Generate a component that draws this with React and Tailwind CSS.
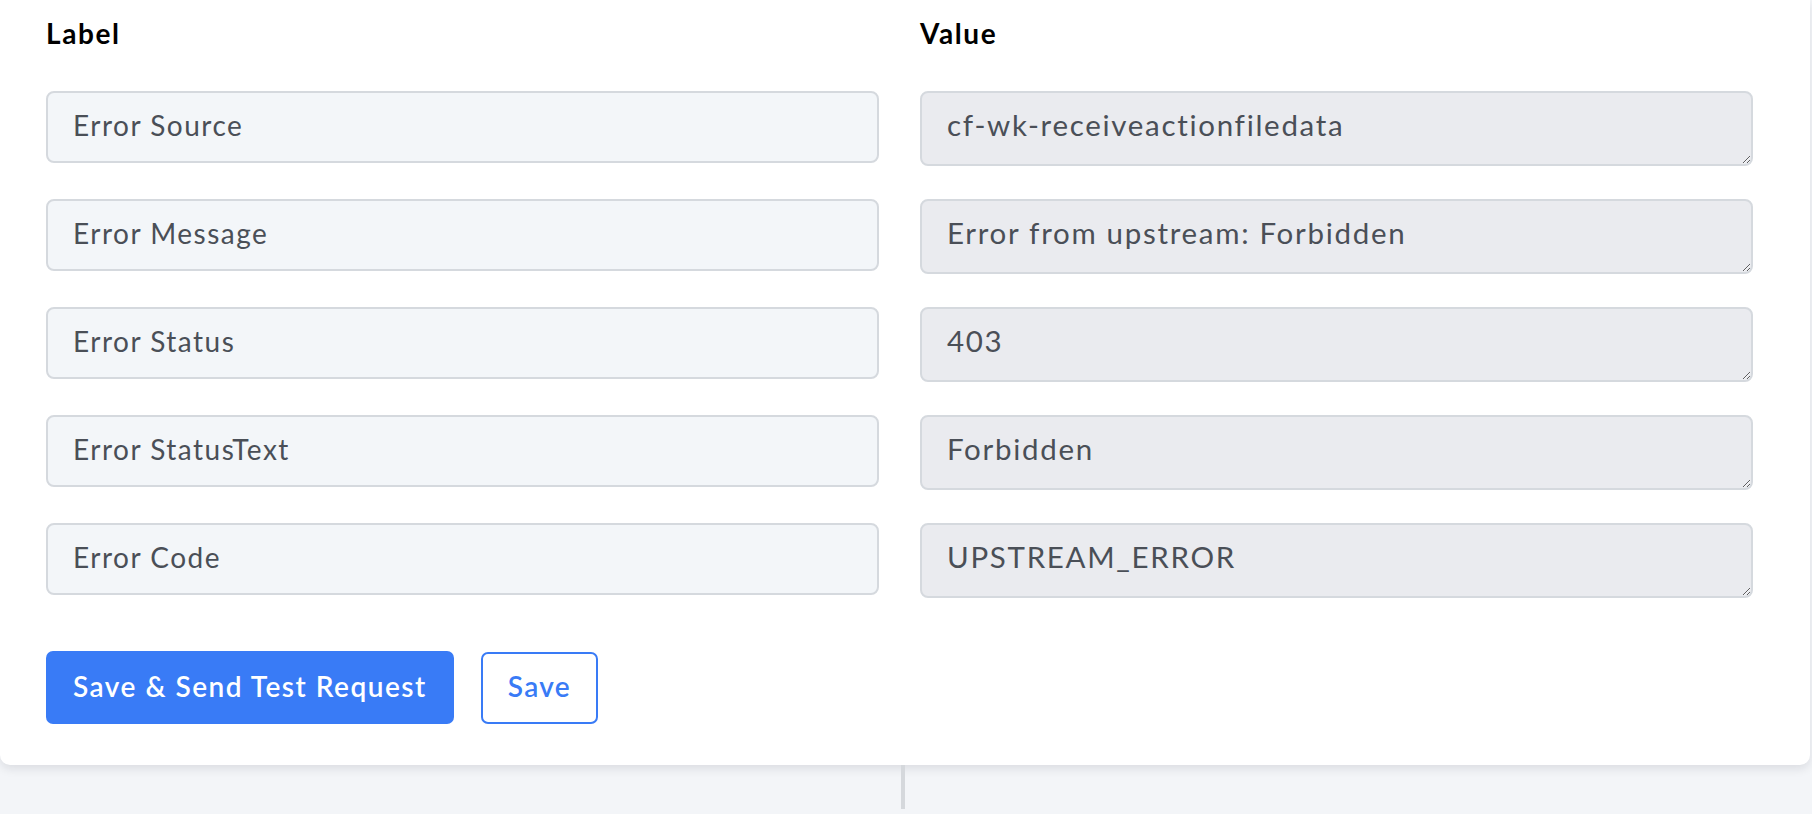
import React from 'react';

const rows = [
  { label: 'Error Source', value: 'cf-wk-receiveactionfiledata' },
  { label: 'Error Message', value: 'Error from upstream: Forbidden' },
  { label: 'Error Status', value: '403' },
  { label: 'Error StatusText', value: 'Forbidden' },
  { label: 'Error Code', value: 'UPSTREAM_ERROR' },
];

export default function App() {
  return (
    <div className="min-h-screen bg-[#f3f5f8] font-['Lato',sans-serif]">
      {/* Card */}
      <div className="w-[1810px] bg-white rounded-b-[10px] shadow-[0_4px_10px_rgba(15,23,42,0.10)] px-[46px] pt-[15px] pb-[41px]">
        <div className="grid grid-cols-[833px_833px] gap-x-[41px] mb-[40px]">
          <h2 className="text-[28px] leading-[36px] font-bold tracking-[1.6px] text-black">Label</h2>
          <h2 className="text-[28px] leading-[36px] font-bold tracking-[1.6px] text-black">Value</h2>
        </div>

        <div className="flex flex-col gap-[33px]">
          {rows.map((row) => (
            <div key={row.label} className="grid grid-cols-[833px_833px] gap-x-[41px] items-start">
              <input
                readOnly
                value={row.label}
                className="h-[72px] rounded-[8px] border-2 border-[#d5d9de] bg-[#f3f6f9] px-[25px] pb-[5px] text-[28px] tracking-[1.5px] text-[#4a4f57] outline-none font-['Lato',sans-serif]"
              />
              <textarea
                readOnly
                rows={1}
                value={row.value}
                className="h-[75px] rounded-[8px] border-2 border-[#d5d9de] bg-[#eaebef] px-[25px] pt-[12px] leading-[40px] text-[29.5px] tracking-[1.7px] text-[#4a4f57] outline-none font-['Lato',sans-serif]"
              />
            </div>
          ))}
        </div>

        <div className="flex items-center gap-[27px] mt-[53px]">
          <button className="h-[73px] rounded-[7px] bg-[#397bf6] px-[27px] pb-[4px] text-[28px] font-semibold tracking-[1.5px] text-white">
            Save &amp; Send Test Request
          </button>
          <button className="h-[72px] rounded-[7px] border-2 border-[#397bf6] bg-white px-[25px] pb-[4px] text-[28px] font-semibold tracking-[1.3px] text-[#397bf6]">
            Save
          </button>
        </div>
      </div>

      {/* Divider below the card */}
      <div className="ml-[901px] w-[4px] h-[44px] bg-[#d5d8dc]" />
    </div>
  );
}
